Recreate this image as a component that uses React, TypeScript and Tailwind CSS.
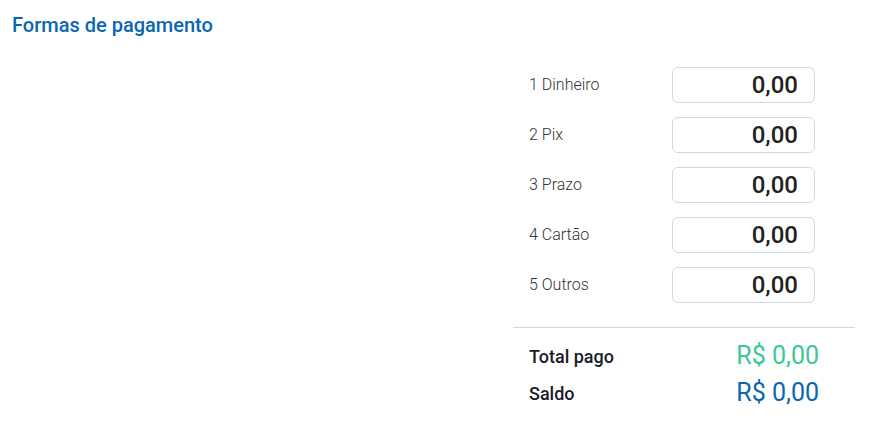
import { useState } from 'react';

const formas = ['1 Dinheiro', '2 Pix', '3 Prazo', '4 Cartão', '5 Outros'];

export default function App() {
  const [valores, setValores] = useState<string[]>(formas.map(() => '0,00'));

  return (
    <div className="w-[871px] h-[429px] bg-white font-['Roboto',sans-serif]">
      <div className="pl-3 pt-[11px]">
        <h2 className="text-[20px] leading-[28px] font-medium text-[#0b66b1]">Formas de pagamento</h2>
      </div>

      <div className="flex justify-end pr-4 mt-[28px]">
        <div className="w-[342px]">
          <div className="flex flex-col gap-[14px] pr-10 pl-4">
            {formas.map((f, i) => (
              <div key={f} className="flex items-center justify-between">
                <span className="text-[16px] font-light text-[#333]">{f}</span>
                <input
                  value={valores[i]}
                  onChange={(e) => {
                    const next = [...valores];
                    next[i] = e.target.value;
                    setValores(next);
                  }}
                  className="w-[143px] h-[36px] rounded-md border border-[#d3d7de] px-4 text-right text-[24px] font-medium text-[#222] outline-none"
                />
              </div>
            ))}
          </div>

          <div className="mt-[24px] border-t border-[#d3d7de]" />

          <div className="pl-4 pr-9 pt-[13px] flex flex-col gap-[7px]">
            <div className="flex items-center justify-between">
              <span className="text-[18px] font-medium text-[#1a1a2a]">Total pago</span>
              <span className="text-[25px] leading-[30px] text-[#3cc795]">R$ 0,00</span>
            </div>
            <div className="flex items-center justify-between">
              <span className="text-[18px] font-medium text-[#1a1a2a]">Saldo</span>
              <span className="text-[25px] leading-[30px] text-[#0b66b1]">R$ 0,00</span>
            </div>
          </div>
        </div>
      </div>
    </div>
  );
}
